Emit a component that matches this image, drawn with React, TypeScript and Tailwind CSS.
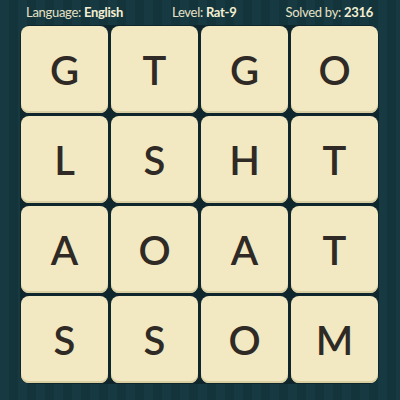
import React from 'react';

const LETTERS = ['G', 'T', 'G', 'O', 'L', 'S', 'H', 'T', 'A', 'O', 'A', 'T', 'S', 'S', 'O', 'M'];

export default function App() {
  return (
    <div
      className="w-[400px] h-[400px] overflow-hidden bg-[repeating-linear-gradient(90deg,#173a42_0px,#173a42_9px,#14343c_9px,#14343c_18px)] flex flex-col"
      style={{ fontFamily: 'Lato, "Open Sans", sans-serif' }}
    >
      <div className="h-[25px] flex items-center justify-between pl-[26px] pr-[27px] text-[13px] tracking-[-0.3px] text-[#e6e2c6] leading-none">
        <span>
          Language: <b className="font-bold text-[#f3efd3]">English</b>
        </span>
        <span>
          Level: <b className="font-bold text-[#f3efd3]">Rat-9</b>
        </span>
        <span>
          Solved by: <b className="font-bold text-[#f3efd3]">2316</b>
        </span>
      </div>
      <div className="ml-[20px] w-[359px] p-px rounded-[10px] bg-[#0f262c] grid grid-cols-4 gap-[3px]">
        {LETTERS.map((l, i) => (
          <div
            key={i}
            className="h-[87px] rounded-[8px] bg-[#f2e9c2] shadow-[inset_0_-2px_0_#d9cfa3] flex items-center justify-center text-[40px] font-semibold text-[#2f2a25] leading-none"
          >
            {l}
          </div>
        ))}
      </div>
    </div>
  );
}
